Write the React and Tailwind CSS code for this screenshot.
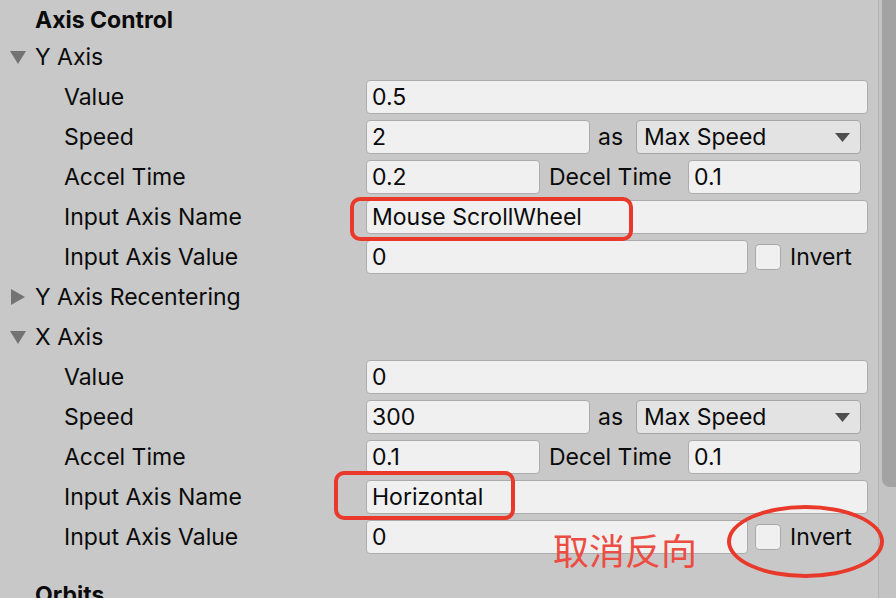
import React from 'react';

const font = { fontFamily: 'Inter, "Noto Sans", sans-serif' };

function Field({ w, children }) {
  return (
    <div
      className={`h-[34px] ${w} shrink-0 rounded-[4px] border border-[#acacac] bg-[#f0f0f0] pl-[5px] flex items-center text-[#0b0b0b]`}
    >
      {children}
    </div>
  );
}

function Arrow({ open }) {
  return (
    <svg width="18" height="16" viewBox="0 0 18 16" className="shrink-0">
      {open ? (
        <polygon points="1,2 17,2 9,15" fill="#737373" />
      ) : (
        <polygon points="2,0 16,8 2,16" fill="#737373" />
      )}
    </svg>
  );
}

function Row({ label, children, className = 'h-[40px]' }) {
  return (
    <div className={`${className} flex items-center`}>
      <div className="w-[366px] shrink-0 pl-[64px]">{label}</div>
      {children}
    </div>
  );
}

function FoldRow({ label, open }) {
  return (
    <div className="h-[40px] flex items-center pl-[9px] gap-[8px]">
      <Arrow open={open} />
      <span>{label}</span>
    </div>
  );
}

function AxisBlock({ name, value, speed, accel, decel, inputName }) {
  return (
    <>
      <FoldRow label={name} open />
      <Row label="Value">
        <Field w="w-[502px]">{value}</Field>
      </Row>
      <Row label="Speed">
        <Field w="w-[224px]">{speed}</Field>
        <span className="ml-[8px] w-[38px]">as</span>
        <div className="h-[34px] w-[225px] rounded-[4px] border border-[#a6a6a6] bg-[#e3e3e3] pl-[7px] pr-[10px] flex items-center justify-between">
          <span>Max Speed</span>
          <svg width="15" height="9" viewBox="0 0 15 9">
            <polygon points="0,0 15,0 7.5,9" fill="#4f4f4f" />
          </svg>
        </div>
      </Row>
      <Row label="Accel Time">
        <Field w="w-[174px]">{accel}</Field>
        <span className="ml-[9px] w-[139px]">Decel Time</span>
        <Field w="w-[173px]">{decel}</Field>
      </Row>
      <Row label="Input Axis Name">
        <Field w="w-[502px]">{inputName}</Field>
      </Row>
      <Row label="Input Axis Value">
        <Field w="w-[382px]">0</Field>
        <div className="ml-[7px] h-[26px] w-[26px] rounded-[4px] border border-[#a8a8a8] bg-[#f0f0f0]" />
        <span className="ml-[9px]">Invert</span>
      </Row>
    </>
  );
}

export default function App() {
  return (
    <div
      className="relative w-[896px] h-[598px] overflow-hidden bg-[#c8c8c8] flex text-[23px] leading-none text-[#0b0b0b]"
      style={font}
    >
      <div className="w-[878px] shrink-0">
        <div className="h-[37px] flex items-center pl-[35px] font-bold pt-[3px]">Axis Control</div>
        <AxisBlock
          name="Y Axis"
          value="0.5"
          speed="2"
          accel="0.2"
          decel="0.1"
          inputName="Mouse ScrollWheel"
        />
        <div className="h-[40px] flex items-center pl-[9px] gap-[8px]">
          <Arrow open={false} />
          <span>Y Axis Recentering</span>
        </div>
        <AxisBlock
          name="X Axis"
          value="0"
          speed="300"
          accel="0.1"
          decel="0.1"
          inputName="Horizontal"
        />
        <div className="mt-[18px] h-[40px] flex items-center pl-[35px] font-bold">Orbits</div>
      </div>

      {/* scrollbar */}
      <div className="flex-1 flex border-l border-[#b2b2b2]">
        <div className="w-[3px] bg-[#c3c3c3]" />
        <div className="flex-1 bg-[#c3c3c3]">
          <div className="h-[487px] bg-[#a3a3a3] rounded-bl-[8px]" />
        </div>
      </div>

      {/* annotations */}
      <div className="absolute left-[350px] top-[197px] w-[283px] h-[44px] rounded-[10px] border-[4px] border-[#e8392b]" />
      <div className="absolute left-[334px] top-[471px] w-[181px] h-[49px] rounded-[10px] border-[4px] border-[#e8392b]" />
      <div className="absolute left-[727px] top-[505px] w-[157px] h-[73px] rounded-[50%] border-[4px] border-[#e8392b]" />
      <div
        className="absolute left-[553px] top-[531px] text-[36px] leading-none text-[#ec4c42]"
        style={{ fontFamily: '"Noto Sans CJK SC", sans-serif' }}
      >
        取消反向
      </div>
    </div>
  );
}
